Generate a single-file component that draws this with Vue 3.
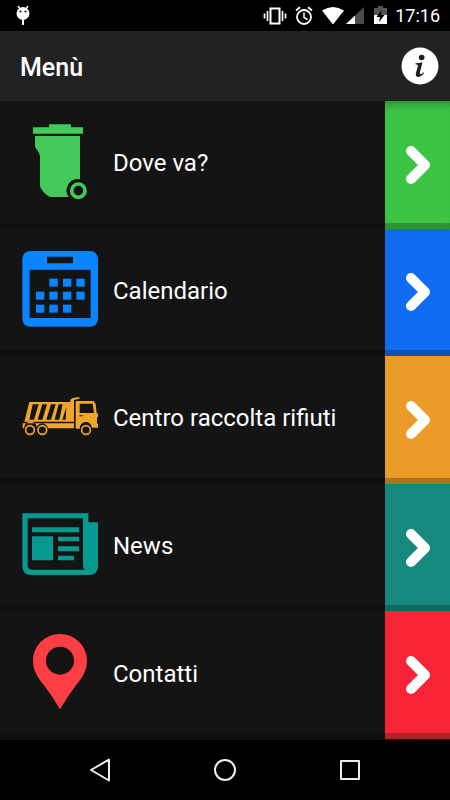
<script setup>
const items = [
  { id: 'bin', label: 'Dove va?', viewBox: '66 41 228 228' },
  { id: 'calendar', label: 'Calendario', viewBox: '66 64 228 228' },
  { id: 'truck', label: 'Centro raccolta rifiuti', viewBox: '36 -3 228 228' },
  { id: 'news', label: 'News', viewBox: '36 20 228 228' },
  { id: 'pin', label: 'Contatti', viewBox: '36 101 228 228' },
]
const days = [
  [148, 147], [189, 147], [229, 147],
  [108, 186], [148, 186], [189, 186], [229, 186],
  [108, 225], [148, 225], [189, 225],
]
</script>

<template>
  <div class="screen">
    <div class="status">
      <svg class="debug" viewBox="0 0 14 22" aria-hidden="true">
        <path d="M2 1l2 3M12 1l-2 3" stroke="#fff" stroke-width="1.4" />
        <circle cx="7" cy="8.500" r="6.500" fill="#fff" />
        <path d="M3.500 6.500h2M8.500 6.500h2" stroke="#000" stroke-width="1.300" />
        <path d="M7 15v5" stroke="#fff" stroke-width="2" />
      </svg>
      <div class="tray">
        <svg width="24" height="20" viewBox="0 0 24 20" aria-hidden="true">
          <path d="M7.500 2.500h9v15h-9z" fill="none" stroke="#fff" stroke-width="2" />
          <path d="M4.500 5v10M19.500 5v10M1.500 7.500v5M22.500 7.500v5" stroke="#fff" stroke-width="1.700" />
        </svg>
        <svg class="alarm" width="18" height="20" viewBox="0 0 18 20" aria-hidden="true">
          <circle cx="9" cy="11" r="7" fill="none" stroke="#fff" stroke-width="1.800" />
          <path d="M1 4.500L5 1.200M17 4.500L13 1.200" stroke="#fff" stroke-width="1.800" />
          <path d="M9 6.500v5l3.500 2" fill="none" stroke="#fff" stroke-width="1.500" />
        </svg>
        <svg class="wifi" width="22" height="20" viewBox="0 0 22 20" aria-hidden="true">
          <path d="M0 4.500Q11-2.500 22 4.500L11 18.500z" fill="#fff" />
        </svg>
        <svg width="18" height="20" viewBox="0 0 18 20" aria-hidden="true">
          <path d="M18 1v17H0z" fill="#4c4c4c" />
          <path d="M9 9.500V18H0z" fill="#fff" />
        </svg>
        <svg class="battery" width="13" height="20" viewBox="0 0 13 20" aria-hidden="true">
          <path d="M0 2h4V0h5v2h4v8H0z" fill="#555" />
          <path d="M0 9h13v9H0z" fill="#fff" />
          <path d="M7.500 4L2.500 11h3.500l-1 5L10.500 9H7z" fill="#000" />
        </svg>
        <time>17:16</time>
      </div>
    </div>

    <header class="bar">
      <h1>Menù</h1>
      <button type="button" class="info" aria-label="Informazioni">
        <svg viewBox="0 0 38 38" aria-hidden="true">
          <circle cx="19" cy="19" r="18.500" fill="#fff" />
          <circle cx="20.700" cy="10.500" r="2.800" fill="#1b1b1b" />
          <path d="M14.500 16.200Q18 16.200 21.500 15.200L18.900 25.300Q18.400 27.500 20 27.200Q21.300 26.800 22.300 25.200L23 25.900C20.800 29 18.700 30 16.900 29.900C15 29.700 14.400 28.200 15 26L16.900 18.900Q17.200 17.500 14.400 17.200z" fill="#1b1b1b" />
        </svg>
      </button>
    </header>

    <nav class="menu">
      <a v-for="item in items" :key="item.id" href="#" class="row" :class="item.id">
        <span class="content">
          <svg class="icon" :viewBox="item.viewBox" aria-hidden="true">
            <g v-if="item.id === 'bin'">
              <path d="M99 51h48v-9h66v9h36v19H99z" />
              <path d="M105 77h135v130a34 34 0 0 0-34 53h-54q-12-3-24-18q-8-10-8-16v-88q-2-12-9-20q-6-7-6-11z" />
              <circle cx="235" cy="241" r="20" fill="none" stroke="currentColor" stroke-width="11" />
            </g>
            <g v-else-if="item.id === 'calendar'">
              <path fill-rule="evenodd" d="M94 64h173q27 0 27 27v173q0 27-27 27H94q-27 0-27-27V91q0-27 27-27zM141 81v20h78V81zM89 120v145h183V120z" />
              <rect v-for="(d, i) in days" :key="i" :x="d[0]" :y="d[1]" width="25" height="24" />
            </g>
            <g v-else-if="item.id === 'truck'">
              <path fill-rule="evenodd" d="M58 66H181V59L188 54L208 51V56L192 60V125H43zM68 73L58 119H72L86 73zM97 73L83 119H97L111 73zM123 73L109 119H123L137 73zM146 73L134 119H148L158 73zM169 82L157 119H167z" />
              <path d="M38 130H192V145H114A18 18 0 0 0 80 141A18 18 0 0 0 43 145H38z" />
              <path fill-rule="evenodd" d="M197 63H251L257 72L260 100H264V110L261 113V129L264 132V143H246A18 18 0 0 0 209 146H197zM209 71V99H252L248 71zM208 106V109H218V106z" />
              <g fill="none" stroke="currentColor" stroke-width="5">
                <circle cx="60" cy="150" r="13" />
                <circle cx="97" cy="150" r="13" />
                <circle cx="228" cy="150" r="13" />
              </g>
            </g>
            <g v-else-if="item.id === 'news'">
              <path fill-rule="evenodd" d="M37 39H235V66H264V197Q264 224 237 224H64Q37 224 37 197zM53 54V195Q53 208 66 208H224Q219 204 219 195V54z" />
              <path d="M66 81H207V96H66zM66 108H129V180H66zM144 109H207V123H144zM144 138H207V153H144zM144 166H192V180H144z" />
            </g>
            <path v-else fill-rule="evenodd" d="M150 101C194 101 231 136 231 181C231 211 216 232 198 255Q174 286 150 327Q126 286 102 255C84 232 69 211 69 181C69 136 106 101 150 101zM150 139A42 42 0 1 0 150 223A42 42 0 1 0 150 139z" />
          </svg>
          <span class="label">{{ item.label }}</span>
        </span>
        <span class="go">
          <svg width="26" height="38" viewBox="0 0 26 38" aria-hidden="true">
            <path d="M6 5L20 19L6 33" fill="none" stroke="#fff" stroke-width="10" stroke-linecap="round" stroke-linejoin="round" />
          </svg>
        </span>
      </a>
    </nav>

    <footer class="keys">
      <button type="button" aria-label="Indietro">
        <svg viewBox="0 0 24 24"><path d="M21 1.500v21L3 12z" /></svg>
      </button>
      <button type="button" aria-label="Home">
        <svg viewBox="0 0 24 24"><circle cx="12" cy="12" r="10" /></svg>
      </button>
      <button type="button" aria-label="Recenti">
        <svg viewBox="0 0 24 24"><path d="M3 3h18v18H3z" /></svg>
      </button>
    </footer>
  </div>
</template>

<style>
body {
  margin: 0;
  background: #000;
}
</style>

<style scoped>
.screen {
  display: flex;
  flex-direction: column;
  min-height: 100vh;
  background: #000;
  color: #fff;
  font-family: Roboto, "Noto Sans", sans-serif;
}
svg {
  display: block;
  flex: none;
}
button {
  padding: 0;
  border: 0;
  background: none;
  cursor: pointer;
}
.status {
  display: flex;
  align-items: center;
  justify-content: space-between;
  height: 31px;
  padding: 0 10px 0 16px;
}
.debug {
  width: 14px;
  height: 22px;
}
.tray {
  display: flex;
  align-items: center;
}
.alarm {
  margin-left: 8px;
}
.wifi {
  margin-left: 9px;
  margin-right: 2px;
}
.battery {
  margin: 0 8px 0 10px;
}
time {
  font-size: 18px;
  line-height: 20px;
}
.bar {
  display: flex;
  align-items: center;
  justify-content: space-between;
  height: 70px;
  padding: 0 11px 0 20px;
  background: #222;
}
h1 {
  margin: 0;
  padding-top: 3px;
  font-size: 25px;
  font-weight: 500;
  line-height: 32px;
}
.info svg {
  width: 38px;
  height: 38px;
}
.menu {
  flex: 1;
  display: grid;
  grid-auto-rows: 1fr;
  padding-bottom: 1px;
  background: #141414;
}
.row {
  display: flex;
  min-height: 100px;
  color: #fff;
  text-decoration: none;
}
.content {
  flex: 1;
  display: flex;
  align-items: center;
  gap: 15px;
  padding-left: 22px;
  background: #141414;
  border-bottom: 6px solid #0f0f0f;
}
.icon {
  width: 76px;
  height: 76px;
  fill: currentColor;
  color: var(--icon);
}
.label {
  padding-top: 3px;
  font-size: 24px;
  line-height: 32px;
}
.go {
  display: flex;
  align-items: center;
  justify-content: center;
  width: 65px;
  background: linear-gradient(to top, var(--edge) 6px, var(--tile) 6px);
}
.bin { --icon: #43ca5a; --tile: #3cc445; --edge: #2e9434; }
.bin .go {
  box-shadow: inset 0 9px 9px -6px #2a8a30;
}
.calendar { --icon: #0986ff; --tile: #0f6cf3; --edge: #0e51b4; }
.truck { --icon: #f2a52c; --tile: #e99a27; --edge: #ae7420; }
.news { --icon: #06998f; --tile: #15897e; --edge: #13675f; }
.pin { --icon: #fd3e45; --tile: #f62435; --edge: #b61e2a; }
.keys {
  display: flex;
  justify-content: center;
  gap: 101px;
  height: 60px;
  align-items: center;
}
.keys svg {
  width: 24px;
  height: 24px;
  fill: none;
  stroke: #eee;
  stroke-width: 2;
  stroke-linejoin: round;
}
</style>
